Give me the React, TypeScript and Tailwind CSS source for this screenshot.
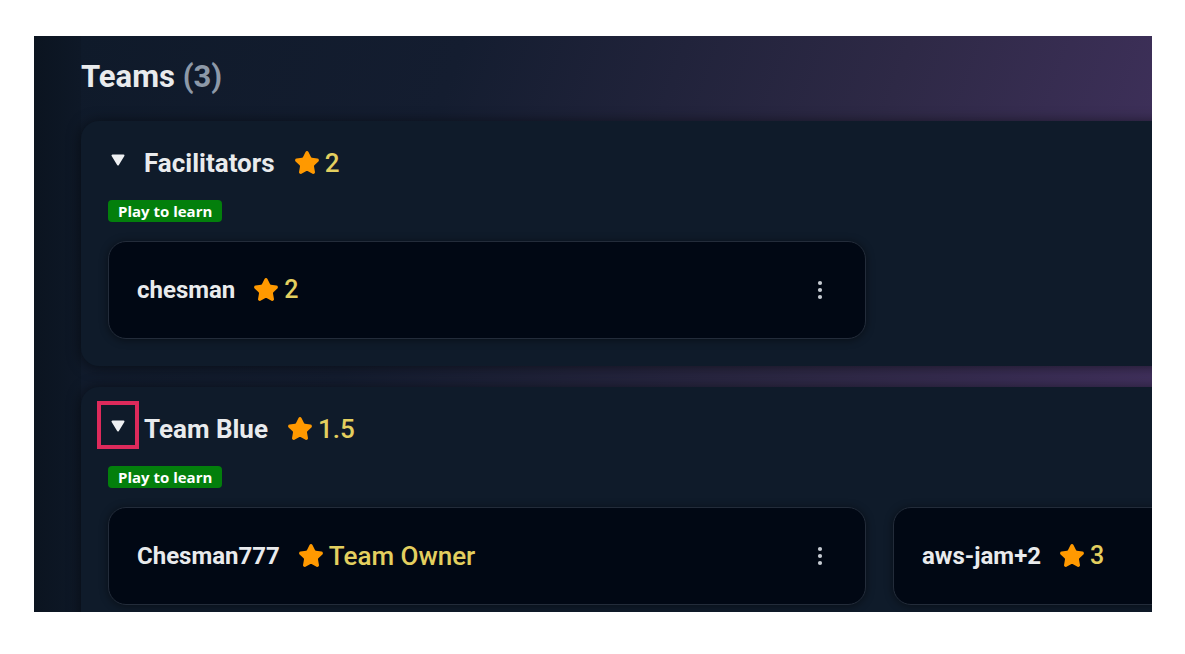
import React from 'react';
import { Star } from 'lucide-react';

type Member = { name: string; score?: string; owner?: boolean };
type Team = { name: string; score: string; highlight?: boolean; members: Member[] };

const teams: Team[] = [
  { name: 'Facilitators', score: '2', members: [{ name: 'chesman', score: '2' }] },
  {
    name: 'Team Blue',
    score: '1.5',
    highlight: true,
    members: [
      { name: 'Chesman777', owner: true },
      { name: 'aws-jam+2', score: '3' },
    ],
  },
];

function Rating({ children, className = '' }: { children: React.ReactNode; className?: string }) {
  return (
    <span className={`flex items-center gap-[5px] text-[#e3cf5f] ${className}`}>
      <Star size={26} fill="#ff9900" stroke="#ff9900" strokeWidth={2} strokeLinejoin="round" />
      <span>{children}</span>
    </span>
  );
}

function Kebab() {
  return (
    <svg width="6" height="20" viewBox="0 0 6 20" className="shrink-0">
      <circle cx="3" cy="3" r="2.1" fill="#c6cbd2" />
      <circle cx="3" cy="10" r="2.1" fill="#c6cbd2" />
      <circle cx="3" cy="17" r="2.1" fill="#c6cbd2" />
    </svg>
  );
}

function MemberCard({ member }: { member: Member }) {
  return (
    <div className="flex h-[98px] items-center justify-between rounded-[18px] border border-[#232c3a] bg-[#010814] pl-[28px] pr-[42px] shadow-[0_1px_8px_rgba(0,0,0,0.45)]">
      <div className="flex items-center text-[24px] leading-[32px]">
        <span className="font-bold text-[#e9ebed]">{member.name}</span>
        <Rating className={`ml-[18px] font-medium ${member.owner ? 'text-[26px]' : 'text-[25px]'}`}>
          {member.owner ? 'Team Owner' : member.score}
        </Rating>
      </div>
      <Kebab />
    </div>
  );
}

function TeamCard({ team }: { team: Team }) {
  return (
    <section className="w-[1700px] rounded-[18px] bg-[#0f1b2a] pb-[27px] pl-[27px] pt-[26px] shadow-[0_1px_14px_rgba(0,0,0,0.55)]">
      <div className="flex h-[32px] items-center">
        <span className="relative ml-[3px] mr-[19px] flex h-[12px] w-[14px] -translate-y-[3px]">
          <svg width="14" height="12" viewBox="0 0 14 12">
            <path d="M1.5 1.5 H12.5 L7 10.5 Z" fill="#eef0f2" stroke="#eef0f2" strokeWidth="2" strokeLinejoin="round" />
          </svg>
          {team.highlight && (
            <span className="absolute left-[-14px] top-[-19px] h-[48px] w-[42px] border-[4px] border-[#dd2a5b]" />
          )}
        </span>
        <h3 className="text-[26px] font-bold leading-[32px] text-[#e9ebed]">{team.name}</h3>
        <Rating className="ml-[19px] text-[26px] font-medium leading-[32px]">{team.score}</Rating>
      </div>
      <div className="mt-[21px] h-[22px] w-fit rounded-[4px] bg-[#037f0c] px-[10px] font-['Open_Sans',sans-serif] text-[15px] font-bold leading-[22px] text-white">
        Play to learn
      </div>
      <div className="mt-[19px] grid grid-cols-[758px_758px] gap-[27px]">
        {team.members.map((m) => (
          <MemberCard key={m.name} member={m} />
        ))}
      </div>
    </section>
  );
}

export default function App() {
  return (
    <div className="min-h-screen bg-white pl-[34px] pt-[36px] font-['Roboto',sans-serif]">
      <div className="flex h-[576px] w-[1118px] overflow-hidden">
        {/* collapsed side rail */}
        <div className="w-[47px] shrink-0 bg-gradient-to-r from-[#0b1420] to-[#0e1827]" />
        <main className="min-w-0 flex-1 bg-[linear-gradient(110deg,#0f1a2a_0%,#141d30_30%,#2e2946_65%,#473465_100%)] pt-[23px]">
          <h2 className="text-[31px] font-bold leading-[36px] text-[#e9ebed]">
            Teams <span className="text-[#8d99a8]">(3)</span>
          </h2>
          <div className="mt-[26px] flex flex-col gap-[21px]">
            {teams.map((t) => (
              <TeamCard key={t.name} team={t} />
            ))}
          </div>
        </main>
      </div>
    </div>
  );
}
